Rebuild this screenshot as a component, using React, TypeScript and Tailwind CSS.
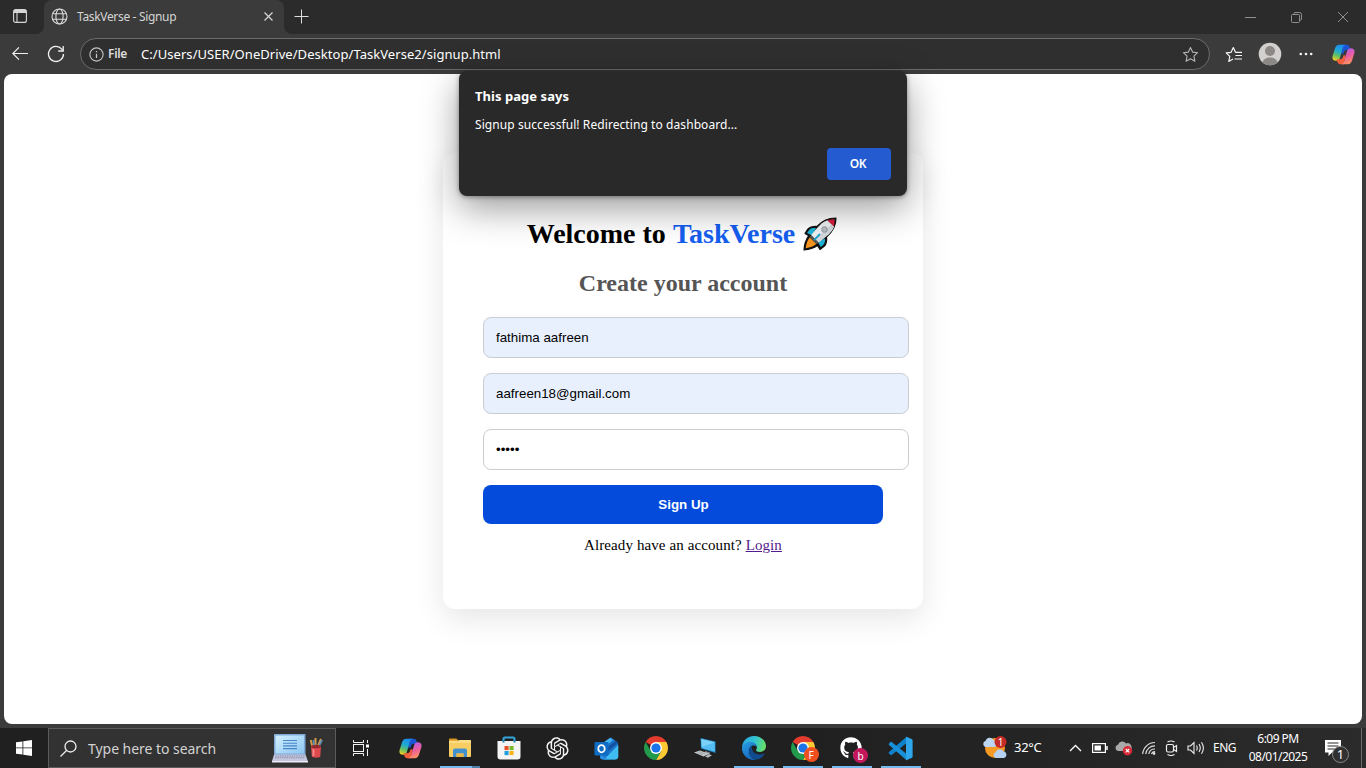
import React from "react";
import { FaGithub } from "react-icons/fa";
import { RiOpenaiFill } from "react-icons/ri";

const ui = "font-['Noto_Sans','Open_Sans',sans-serif]";

function CopilotIcon({ size, id }: { size: number; id: string }) {
  const leg =
    "M7.500 1.800H14.500c-2 .3-2.800 1.900-3.300 3.600L8.200 15.700c-.6 2-2 2.900-3.900 2.900C1.100 18.600-.1 16.500.7 13.400L3 6c.9-2.900 2.300-4.200 4.500-4.200z";
  const cap = "M11.500 1.800h3.700c2 0 2.700 1 3.200 2.600l.8 2.600h-3.400c-2.100 0-2.900 1-3.500 2.900l-.4 1.300-2.300-.2 1.500-5.600z";
  return (
    <svg width={size} height={size} viewBox="0 0 24 24">
      <defs>
        <linearGradient id={id + "a"} x1="0.55" y1="0" x2="0.25" y2="1">
          <stop offset="0" stopColor="#1b8df0" />
          <stop offset="0.4" stopColor="#22abd0" />
          <stop offset="0.68" stopColor="#63bf66" />
          <stop offset="1" stopColor="#f4d21f" />
        </linearGradient>
        <linearGradient id={id + "b"} x1="0.6" y1="1" x2="0.3" y2="0">
          <stop offset="0" stopColor="#b15be8" />
          <stop offset="0.5" stopColor="#ee5f9c" />
          <stop offset="1" stopColor="#ff9a55" />
        </linearGradient>
      </defs>
      <path d={cap} fill="#1a55d6" />
      <path d={leg} fill={`url(#${id}a)`} />
      <g transform="rotate(180 12 12)">
        <path d={cap} fill="#f3603c" />
        <path d={leg} fill={`url(#${id}b)`} />
      </g>
    </svg>
  );
}

function ChromeIcon() {
  return (
    <svg width="24" height="24" viewBox="0 0 24 24">
      <path d="M12 12 1.610 6A12 12 0 0 1 22.390 6H12z" fill="#e33b2e" />
      <path d="M12 6h10.390A12 12 0 0 1 12 24l5.200-9z" fill="#fcc934" />
      <path d="M6.800 15 1.610 6A12 12 0 0 0 12 24l5.200-9L12 14z" fill="#229a4b" />
      <circle cx="12" cy="12" r="6" fill="#fff" />
      <circle cx="12" cy="12" r="4.600" fill="#1a73e8" />
    </svg>
  );
}

function EdgeIcon() {
  return (
    <svg width="24" height="24" viewBox="0 0 24 24">
      <defs>
        <linearGradient id="edgeTop" x1="0" y1="0.3" x2="1" y2="0.5">
          <stop offset="0" stopColor="#2aa5e0" />
          <stop offset="0.5" stopColor="#31c3d2" />
          <stop offset="1" stopColor="#68df65" />
        </linearGradient>
        <linearGradient id="edgeSide" x1="0" y1="0" x2="0.7" y2="1">
          <stop offset="0" stopColor="#2ba0e6" />
          <stop offset="1" stopColor="#1261b8" />
        </linearGradient>
      </defs>
      <path d="M0 12C0 5.200 5 0 12 0s12 4.800 12 10.300c0 3.300-2.700 5.700-6 5.700-2.500 0-4-.9-4-1.700 0-.6.900-1 .9-2.800C14.900 9 12 7 8.500 7 4 7 .8 9.500 0 12z" fill="url(#edgeTop)" />
      <path d="M0 12.500C.5 8.300 4 6 8.200 6c3.800 0 6.700 2 6.700 5-.6-.8-1.700-1.400-3-1.400C8.700 9.600 7 12.300 7 15c0 4.500 3.200 7.800 7 8.800-.6.100-1.300.200-2 .200C5.400 24 0 18.600 0 12.500z" fill="url(#edgeSide)" />
      <path d="M9.600 10.400C8 11.500 7 13.200 7 15c0 5 4 9 8.600 8.500 3.100-.9 5.600-3 6.900-5.400.3-.6-.1-.8-.6-.6-1.100.6-2.600.9-4 .900-4.200 0-7.900-2.800-7.900-6 0-.7.100-1.400-.4-2z" fill="#104b8d" />
    </svg>
  );
}

function ExplorerIcon() {
  return (
    <svg width="24" height="20" viewBox="0 0 24 20">
      <path d="M1 1.500C1 .9 1.400.5 2 .500h6.500L10.500 3H1z" fill="#d9951d" />
      <rect x="1" y="2.500" width="22" height="16.500" rx="1" fill="#f8ce62" />
      <path d="M1 3h9l1.500-1H22c.6 0 1 .4 1 1v2H1z" fill="#fbdc85" />
      <path d="M5 19v-6.500c0-1.100.9-2 2-2h10c1.100 0 2 .9 2 2V19h-3.500v-3.500h-7V19z" fill="#4390ce" />
      <path d="M8.500 15.500h7V19h-7z" fill="#e9b646" />
    </svg>
  );
}

function StoreIcon() {
  return (
    <svg width="24" height="24" viewBox="0 0 24 24">
      <path d="M6.500 6V3c0-1 .6-1.500 1.500-1.500h8c.9 0 1.500.5 1.500 1.500v3" fill="none" stroke="#34a6dd" strokeWidth="2" />
      <path d="M.5 5h23v15.500a3 3 0 0 1-3 3h-17a3 3 0 0 1-3-3z" fill="#f4f4f4" />
      <path d="M6.500 6.500V4M17.500 6.500V4" stroke="#2583b5" strokeWidth="2" />
      <rect x="7.500" y="10" width="4.100" height="4.100" fill="#e8502a" />
      <rect x="12.500" y="10" width="4.100" height="4.100" fill="#7ab82c" />
      <rect x="7.500" y="15" width="4.100" height="4.100" fill="#1f9fdf" />
      <rect x="12.500" y="15" width="4.100" height="4.100" fill="#f7b413" />
    </svg>
  );
}

function OutlookIcon() {
  return (
    <svg width="25" height="23" viewBox="0 0 25 23">
      <path d="M6 9 15.500 1c.9-.7 1.600-.7 2.500 0l6 5v13c0 2-1 3.500-3 3.500H9c-2 0-3-1-3-3z" fill="#1c78ce" />
      <path d="m8 6.500 8-5.500 3 2-10 8z" fill="#45b6f0" />
      <path d="m11 12 11-8.500 2 2.500-12 10z" fill="#14529f" />
      <path d="M24.300 8v11.500c0 2-1.300 3-3 3H10z" fill="#40bdf0" />
      <path d="m7 18 7 4.500H9c-2 0-3-1-3-3z" fill="#2a8fe0" />
      <rect x=".5" y="5" width="14" height="13.500" rx="1.300" fill="#0f6cc4" />
      <ellipse cx="7.500" cy="11.700" rx="3.200" ry="3.600" fill="none" stroke="#fff" strokeWidth="1.800" />
    </svg>
  );
}

function ComputerIcon() {
  return (
    <svg width="24" height="22" viewBox="0 0 24 22">
      <path d="m7.500 1 15 3.500V16L8 11.500z" fill="#1c84c4" />
      <path d="m8.300 2 13.500 3.200v9.600L8.700 10.900z" fill="#55bdf2" />
      <path d="m8.300 2 13.500 3.200-13 4.800z" fill="#7dd1f8" />
      <path d="m12 14 5 1.500-.5 2.500-5-1.500z" fill="#8a9197" />
      <path d="m1 15.500 6-2 9 3.300-5.500 2.700z" fill="#c9cdd1" />
      <path d="m12 19.500 4-2.200 3 1-4 2.500z" fill="#b4bac0" />
      <path d="m4 15.500 6 2.300M6 14.600l6.500 2.500" stroke="#8f969c" strokeWidth=".8" />
    </svg>
  );
}

function CodeIcon() {
  return (
    <svg width="25" height="25" viewBox="0 0 25 25">
      <path d="M18.300 1v6.200L4 18.800c-.6.500-1.200.5-1.700 0L1 17.600c-.5-.5-.5-1.100 0-1.600z" fill="#0f82cc" />
      <path d="M18.300 24v-6.200L4 6.200c-.6-.5-1.200-.5-1.700 0L1 7.400c-.5.500-.5 1.100 0 1.600z" fill="#178fd9" />
      <path d="M18 1c.3-.3.600-.3 1 0l5 2.300c.4.200.6.500.6 1v16.400c0 .5-.2.800-.6 1L19 24c-.4.300-.7.300-1 0z" fill="#2fa6eb" />
    </svg>
  );
}

function RocketIcon() {
  return (
    <svg width="34" height="34" viewBox="0 0 34 34">
      <path d="M33 1C25 1 19.500 3 14 9.500c-4-.3-7 .5-9.500 3L2 16.500l3.800 2.200C3.300 22 1.500 26 1 33c6-.5 10-2 13.500-4.500l2.500 4 4.500-3.500c2-2.400 2.500-5.500 2-9C30 14.500 33 9 33 1z" fill="#111" stroke="#111" strokeWidth="1.200" strokeLinejoin="round" />
      <path d="M13 11.200c-3.500-.3-5.500.2-7.200 2.200l-1.800 2.600L9 18.500z M22 21.500c.3 3-.3 5-2 6.700l-2.400 1.800-2.500-5z" fill="#1fb2d6" />
      <path d="M24.500 3.200C19 5 15.500 9 8 18.300l7.400 7.300C24 19 29 15 31 9.500z" fill="#eef1f3" />
      <path d="m31 9.500-1.700-2.800L11.500 22l3.900 3.600C24 19 29 15 31 9.500z" fill="#d3d9de" />
      <path d="m8.200 18 7.400 7.500-2 1.700-7.100-7z" fill="#555" />
      <path d="M6.700 20.500c-2 2.500-3.400 5.500-4 10.700C7.500 30.500 10.500 29.500 13.300 27z" fill="#f7941e" />
      <path d="M24.500 3.200c2.300-.8 4.500-1 7-1 0 2.800 0 5-.7 7.300z" fill="#da1f3d" />
      <circle cx="21.500" cy="12.500" r="2.800" fill="#b9bec3" stroke="#8f969c" />
      <path d="m17 17-6 6.200" stroke="#18a2c8" strokeWidth="1.800" />
    </svg>
  );
}

function LaptopArt() {
  return (
    <svg width="54" height="32" viewBox="0 0 54 32">
      <defs>
        <linearGradient id="screen" x1="0" y1="0" x2="1" y2="1">
          <stop offset="0" stopColor="#d3efff" />
          <stop offset="1" stopColor="#8cc6f2" />
        </linearGradient>
      </defs>
      <path d="M3 2h31.500v21H3z" fill="#7fa9d6" />
      <path d="M4.500 3.500h28.500v18H4.500z" fill="url(#screen)" />
      <path d="M12 8.500h14M12 11.200h14M12 13.900h14M12 16.600h14" stroke="#4787c6" strokeWidth="1.100" />
      <path d="M3 22.500h31.500l2.300 6.500H1z" fill="#c3c6dd" />
      <path d="M4.500 24h29M4 25.800h30" stroke="#8c8faf" strokeWidth="1.100" strokeDasharray="1.500 .8" />
      <path d="M1 29h36v1.500H1z" fill="#eceaf4" />
      <path d="m41.500 15-1.800-7M44.500 15V6M46.500 15l3.500-8" stroke="#d39a48" strokeWidth="2" />
      <path d="m48 14 3-6M43 14l-.5-6" stroke="#5f8fb5" strokeWidth="1.800" />
      <path d="M40 14h10l-.7 10.500c0 1.500-8.300 1.500-8.500 0z" fill="#df4a4e" />
      <ellipse cx="45" cy="14.500" rx="5" ry="1.800" fill="#8f2a30" />
      <path d="M42.500 17v7" stroke="#f58b88" strokeWidth="1.800" />
    </svg>
  );
}

function WeatherIcon() {
  return (
    <svg width="26" height="24" viewBox="0 0 26 24">
      <circle cx="13" cy="12" r="10" fill="#f59a23" />
      <path d="M4 11a3 3 0 0 1-.5-5.900A4.500 4.500 0 0 1 12 4.500 3.300 3.300 0 0 1 12.500 11z" fill="#bcd5f1" />
      <path d="M14 22a3 3 0 0 1-.3-5.800 4.300 4.300 0 0 1 7.800-.7A3.300 3.300 0 0 1 21.800 22z" fill="#b6d2f3" />
      <circle cx="18.500" cy="6" r="6" fill="#c52b27" />
      <text x="18.500" y="9.500" textAnchor="middle" fontSize="10" fill="#fff" fontFamily="Noto Sans">1</text>
    </svg>
  );
}

function AppSlot({ children, open = false, more = false }: { children: React.ReactNode; open?: boolean; more?: boolean }) {
  return (
    <div className="flex h-10 w-[49px] shrink-0 flex-col items-center">
      <div className="flex h-[38px] w-full items-center justify-center pt-[2px]">{children}</div>
      {open && (
        <div className="flex h-[2px] w-10">
          <div className="flex-1 bg-[#76b9ed]" />
          {more && <div className="w-2 bg-[#4f7fa8]" />}
        </div>
      )}
    </div>
  );
}

function Badge({ children, color }: { children: string; color: string }) {
  return (
    <span className={`absolute top-[11px] left-[13px] flex h-[15px] w-[15px] items-center justify-center rounded-full text-[10px] leading-none text-white ${color}`}>
      {children}
    </span>
  );
}

function TitleBar() {
  return (
    <div className="flex h-[34px] shrink-0 bg-[#2b2b2b]">
      <div className="flex w-11 items-end bg-[#3b3b3b]">
        <div className="flex h-full w-full items-center justify-center rounded-br-lg bg-[#2b2b2b] pr-[4px] pb-[2px]">
          <svg width="16" height="16" viewBox="0 0 16 16" fill="none" stroke="#d5d5d5" strokeWidth="1.100">
            <rect x="1.600" y="1.600" width="12.800" height="12.800" rx="2" />
            <path d="M1.600 4.500h12.800M5 4.500v10" />
            <path d="M2 3h12" strokeWidth="2" />
          </svg>
        </div>
      </div>
      <div className="flex w-60 items-center rounded-t-lg bg-[#3b3b3b] pr-[10px] pb-[1px] pl-[7px]">
        <svg width="17" height="17" viewBox="0 0 17 17" fill="none" stroke="#dadada" strokeWidth="1.100">
          <circle cx="8.500" cy="8.500" r="7.500" />
          <ellipse cx="8.500" cy="8.500" rx="3.600" ry="7.500" />
          <path d="M1.600 5.800h13.800M1.600 11.200h13.800" />
        </svg>
        <span className="ml-[9px] flex-1 text-[12px] leading-4 tracking-[-0.33px] whitespace-nowrap text-[#d5d5d5]">TaskVerse - Signup</span>
        <svg width="11" height="11" viewBox="0 0 11 11" stroke="#d5d5d5" strokeWidth="1.200">
          <path d="m1.500 1.500 8 8m0-8-8 8" />
        </svg>
      </div>
      <div className="flex-1 bg-[#3b3b3b]">
        <div className="flex h-full items-center rounded-bl-lg bg-[#2b2b2b] pr-[17px] pb-[2px] pl-[10px]">
          <svg width="15" height="15" viewBox="0 0 15 15" stroke="#dedede">
            <path d="M7.500.5v14M.5 7.500h14" />
          </svg>
          <div className="ml-auto flex items-center gap-[35px] pt-[2px]">
            <svg width="11" height="11" viewBox="0 0 11 11" stroke="#8f8f8f"><path d="M0 5.500h11" /></svg>
            <svg width="11" height="11" viewBox="0 0 11 11" fill="none" stroke="#8f8f8f">
              <rect x=".5" y="2.500" width="8" height="8" rx="1" />
              <path d="M3 2V1.500a1 1 0 0 1 1-1h4.500a2 2 0 0 1 2 2V7a1 1 0 0 1-1 1H9" />
            </svg>
            <svg width="12" height="12" viewBox="0 0 12 12" stroke="#8f8f8f"><path d="m1 1 10 10M11 1 1 11" /></svg>
          </div>
        </div>
      </div>
    </div>
  );
}

function Toolbar() {
  const star = "m8.500 1.500 2.100 4.600 5 .6-3.700 3.500 1 5-4.400-2.500-4.400 2.500 1-5L1.400 6.700l5-.6z";
  return (
    <div className="flex h-10 shrink-0 items-center pl-[12px]">
      <svg className="-mt-px" width="17" height="15" viewBox="0 0 17 15" fill="none" stroke="#f0f0f0" strokeWidth="1.200">
        <path d="M16 7.500H.8M7 1.300.8 7.500 7 13.700" />
      </svg>
      <svg className="ml-[18px]" width="18" height="18" viewBox="0 0 18 18" fill="none" stroke="#f0f0f0" strokeWidth="1.300">
        <path d="M16.500 9A7.500 7.500 0 1 1 14.800 4.200L16 5.600" />
        <path d="M16.200 1v5h-5" />
      </svg>
      <div className="ml-[15px] flex h-8 w-[1130px] items-center rounded-full border border-[#6b6b6b] bg-[#2f2f2f] pr-[10px] pl-[8px]">
        <svg width="15" height="15" viewBox="0 0 15 15" fill="none" stroke="#c5c5c5" strokeWidth="1.100">
          <circle cx="7.500" cy="7.500" r="6.600" />
          <path d="M7.500 6.700v4.300M7.500 4v1.200" strokeWidth="1.300" />
        </svg>
        <span className="ml-[4px] w-[33px] text-[12px] font-semibold tracking-[-0.3px] text-[#dcdcdc]">File</span>
        <span className="flex-1 pt-px text-[13px] tracking-[0.055px] whitespace-nowrap text-white">C:/Users/USER/OneDrive/Desktop/TaskVerse2/signup.html</span>
        <svg width="17" height="17" viewBox="0 0 17 17" fill="none" stroke="#b5b5b5" strokeWidth="1.100"><path d={star} strokeLinejoin="round" /></svg>
      </div>
      <svg className="ml-[15px]" width="18" height="17" viewBox="0 0 18 17" fill="none" stroke="#f5f5f5" strokeWidth="1.200">
        <path d="m8 13-4.200 2.400 1-5L1.200 6.900l4.900-.6L8.300 1.600l2.200 4.700H17M10.500 9.500H17M9.500 13H17" strokeLinejoin="round" />
      </svg>
      <svg className="ml-[15px]" width="24" height="24" viewBox="0 0 24 24">
        <circle cx="12" cy="12" r="11.300" fill="#d2d0ce" />
        <circle cx="12" cy="9" r="5" fill="#8b8886" />
        <path d="M4.500 20.500c.8-3.300 3.800-5 7.500-5s6.700 1.700 7.500 5A11.300 11.300 0 0 1 4.500 20.500z" fill="#8b8886" />
      </svg>
      <svg className="ml-[17px] mr-[19px]" width="14" height="4" viewBox="0 0 14 4" fill="#f5f5f5">
        <circle cx="1.800" cy="2" r="1.300" /><circle cx="7" cy="2" r="1.300" /><circle cx="12.200" cy="2" r="1.300" />
      </svg>
      <CopilotIcon size={23} id="bar" />
    </div>
  );
}

function SignupCard() {
  const field = "flex h-[41px] w-[426px] items-center rounded-lg border border-[#c9ccd1] px-3 font-['Liberation_Sans',sans-serif] text-[13.333px] text-black";
  return (
    <div className="mt-[79px] flex h-[456px] w-[480px] flex-col rounded-xl bg-white px-10 pt-[61px] font-['Liberation_Serif',serif] shadow-[0_10px_30px_rgba(0,0,0,0.1)]">
      <h1 className="flex h-[40px] items-center justify-center pr-[2px] text-[28px] font-bold whitespace-nowrap text-black">
        Welcome to&nbsp;<span className="text-[#155eef]">TaskVerse</span>
        <span className="ml-[8px] pb-px"><RocketIcon /></span>
      </h1>
      <h2 className="mt-[15px] text-center text-[24px] leading-7 font-bold text-[#555]">Create your account</h2>
      <div className="mt-[20px] flex flex-col gap-[15px]">
        <div className={field + " bg-[#e8f0fe]"}>fathima aafreen</div>
        <div className={field + " bg-[#e8f0fe]"}>aafreen18@gmail.com</div>
        <div className={field + " bg-white"}>•••••</div>
        <button className="h-[39px] rounded-lg bg-[#044bdc] pl-px font-['Liberation_Sans',sans-serif] text-[13.333px] font-bold text-white">Sign Up</button>
      </div>
      <p className="mt-[12px] text-center text-[15px] leading-[18px] tracking-[0.1px] text-black">
        Already have an account? <a className="text-[#551a8b] underline">Login</a>
      </p>
    </div>
  );
}

function AlertDialog() {
  return (
    <div className="absolute top-[71px] left-[459px] flex h-[125px] w-[448px] flex-col rounded-lg bg-[#292929] px-4 pt-[16px] text-white shadow-[0_12px_36px_rgba(0,0,0,0.4),0_1px_5px_rgba(0,0,0,0.4)]">
      <div className="text-[13px] leading-[19px] font-bold tracking-[0.05px]">This page says</div>
      <div className="mt-[10px] text-[12px] leading-[18px] tracking-[0.08px] whitespace-nowrap">Signup successful! Redirecting to dashboard...</div>
      <button className="mt-[14px] h-8 w-16 self-end rounded bg-[#245bd1] pr-[2px] text-[12px] font-semibold tracking-[-0.3px]">OK</button>
    </div>
  );
}

function Taskbar() {
  return (
    <div className="flex h-10 w-full shrink-0 items-center bg-linear-to-r from-[#202020] from-60% to-[#2b2b2b] text-white">
      <div className="flex w-12 shrink-0 justify-center">
        <svg width="16" height="16" viewBox="0 0 16 16" fill="#fff">
          <path d="M0 2.300 6.500 1.400v6.100H0zM7.300 1.300 16 0v7.500H7.300zM0 8.300h6.500v6.200L0 13.700zM7.300 8.300H16V16l-8.700-1.300z" />
        </svg>
      </div>
      <div className="flex h-10 w-72 shrink-0 items-center border border-[#5b5b5b] bg-[#323232] pr-[10px] pl-[11px]">
        <svg width="17" height="17" viewBox="0 0 17 17" fill="none" stroke="#eee" strokeWidth="1.300">
          <circle cx="10.500" cy="6.500" r="5.500" /><path d="m6.500 10.500-6 6" />
        </svg>
        <span className="ml-[11px] flex-1 text-[14px] tracking-[-0.04px] whitespace-nowrap text-[#d2d2d2]">Type here to search</span>
        <LaptopArt />
      </div>
      <div className="flex w-[50px] shrink-0 justify-center pr-[2px]">
        <svg width="17" height="16" viewBox="0 0 17 16" fill="none" stroke="#f2f2f2">
          <path d="M1.500 0v2.500h10V0M1.500 16v-2.500h10V16" /><rect x="1.500" y="4.500" width="10" height="7" />
          <path d="M15.500 0v3M15.500 9v7" /><rect x="14" y="4.500" width="3" height="3" fill="#fff" stroke="none" />
        </svg>
      </div>
      <AppSlot><CopilotIcon size={23} id="task" /></AppSlot>
      <AppSlot open more><ExplorerIcon /></AppSlot>
      <AppSlot><StoreIcon /></AppSlot>
      <AppSlot><RiOpenaiFill size={27} color="#f4f4f4" /></AppSlot>
      <AppSlot><OutlookIcon /></AppSlot>
      <AppSlot><ChromeIcon /></AppSlot>
      <AppSlot><ComputerIcon /></AppSlot>
      <AppSlot open><EdgeIcon /></AppSlot>
      <AppSlot open><div className="relative"><ChromeIcon /><Badge color="bg-[#f0501f]">F</Badge></div></AppSlot>
      <AppSlot open><div className="relative pr-px"><FaGithub size={22} color="#fff" /><Badge color="bg-[#c2185b]">b</Badge></div></AppSlot>
      <AppSlot open><CodeIcon /></AppSlot>
      <div className="ml-auto flex h-10 items-center">
        <WeatherIcon />
        <span className="ml-[6px] w-[55px] text-[13px] tracking-[-0.3px]">32°C</span>
        <svg width="13" height="8" viewBox="0 0 13 8" fill="none" stroke="#fff" strokeWidth="1.300"><path d="m1 7 5.500-5.500L12 7" /></svg>
        <svg className="ml-[10px]" width="16" height="10" viewBox="0 0 16 10" fill="none" stroke="#fff" strokeWidth="1.200">
          <rect x=".6" y=".6" width="12.800" height="8.800" /><rect x="2.500" y="2.500" width="6.500" height="5" fill="#fff" stroke="none" /><path d="M15 3v4" strokeWidth="1.500" />
        </svg>
        <svg className="ml-[7px]" width="18" height="16" viewBox="0 0 18 16">
          <path d="M3.500 11A3.200 3.200 0 0 1 3 4.700 4.500 4.500 0 0 1 11 3.500a3.800 3.800 0 0 1 3 7.500z" fill="#a9a9a9" />
          <circle cx="12.500" cy="10.700" r="4.700" fill="#d92b37" /><path d="m10.800 9 3.400 3.400m0-3.400-3.400 3.400" stroke="#fff" strokeWidth="1.200" />
        </svg>
        <svg className="ml-[9px]" width="14" height="14" viewBox="0 0 14 14" fill="none" stroke="#ddd" strokeWidth="1.200">
          <path d="M.7 13A12.300 12.300 0 0 1 13 1.500M3.800 13A9 9 0 0 1 13 4.800M6.800 13A6 6 0 0 1 13 8M9.500 13A3.500 3.500 0 0 1 13 10.500" /><circle cx="12" cy="12.500" r=".8" fill="#fff" />
        </svg>
        <svg className="ml-[9px]" width="14" height="16" viewBox="0 0 14 16" fill="none" stroke="#eee" strokeWidth="1.200">
          <rect x="1.500" y="4.500" width="7" height="7.500" rx="1.500" /><path d="m8.500 7.500 3-2v6l-3-2M2.500 2q3.500-2 7 0M2.500 14.500q3.500 2 7 0" />
        </svg>
        <svg className="ml-[8px]" width="18" height="14" viewBox="0 0 18 14" fill="none" stroke="#eee" strokeWidth="1.100">
          <path d="M1 5v4h2.500L7 12.500v-11L3.500 5zM9.500 4.500q1.500 2.500 0 5M12 3q2.500 4 0 8M14.500 1.200q3.800 5.800 0 11.600" />
        </svg>
        <span className="ml-[8px] w-[24px] text-[12px] tracking-[-0.5px]">ENG</span>
        <div className="ml-[8px] w-[66px] text-center text-[12px] leading-[18px] tracking-[-0.54px] whitespace-nowrap">
          <div>6:09 PM</div>
          <div>08/01/2025</div>
        </div>
        <svg className="ml-[13px] mt-[7px]" width="28" height="26" viewBox="0 0 28 26">
          <path d="M1 1h16v12.500H8L4.500 17v-3.500H1z" fill="#fff" />
          <path d="M3.500 4h11M3.500 7h11M3.500 10h8" stroke="#292929" strokeWidth="1.200" />
          <circle cx="16.500" cy="15.500" r="8" fill="#303030" stroke="#888" />
          <text x="16.500" y="20.200" textAnchor="middle" fontSize="13" fill="#fff" fontFamily="Noto Sans">1</text>
        </svg>
        <div className="ml-[9px] mr-[4px] h-10 w-px bg-[#6a6a6a]" />
      </div>
    </div>
  );
}

export default function App() {
  return (
    <div className={`relative flex h-[768px] w-[1366px] flex-col overflow-hidden bg-[#3b3b3b] ${ui}`}>
      <TitleBar />
      <Toolbar />
      <main className="mx-1 mb-1 flex h-[650px] shrink-0 justify-center overflow-hidden rounded-lg bg-white">
        <SignupCard />
      </main>
      <Taskbar />
      <AlertDialog />
    </div>
  );
}
